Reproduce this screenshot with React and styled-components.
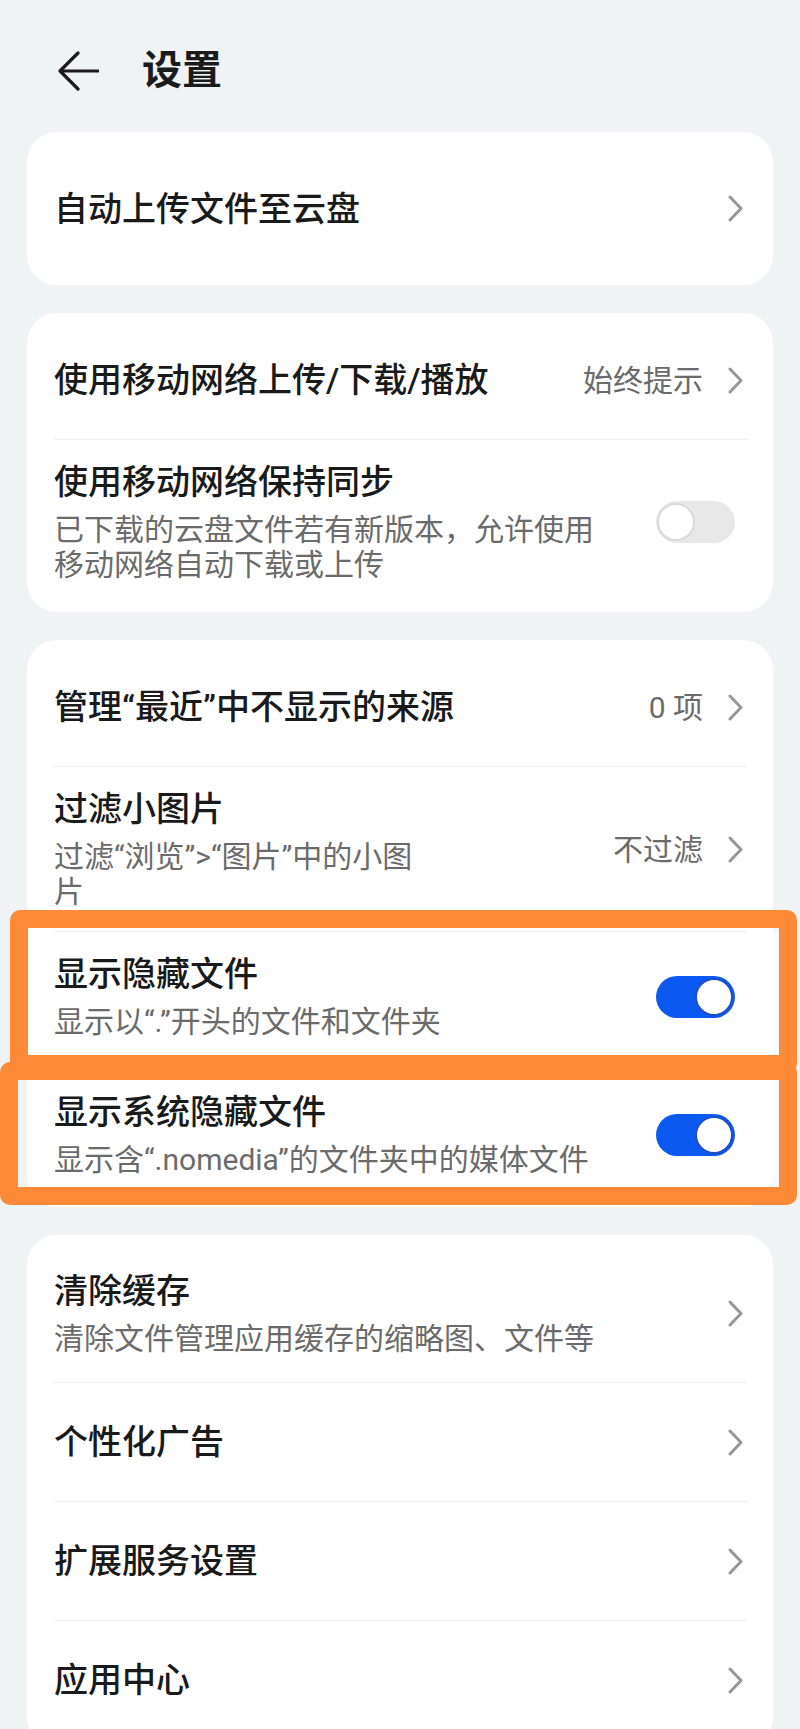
import React from "react";
import styled, { createGlobalStyle, css } from "styled-components";

const FONT = `Roboto, "Noto Sans CJK SC", "Noto Sans", sans-serif`;
const ORANGE = "#fd8a36";

const GlobalStyle = createGlobalStyle`
  html, body {
    margin: 0;
    padding: 0;
    background: #f0f3f3;
    font-family: ${FONT};
    -webkit-font-smoothing: antialiased;
  }
  * { box-sizing: border-box; }
`;

const groups = [
  {
    rows: [{ title: "自动上传文件至云盘", tall: true, chevron: true }]
  },
  {
    rows: [
      { title: "使用移动网络上传/下载/播放", value: "始终提示", chevron: true },
      {
        title: "使用移动网络保持同步",
        sub: "已下载的云盘文件若有新版本，允许使用移动网络自动下载或上传",
        wrap: 550,
        toggle: false
      }
    ]
  },
  {
    rows: [
      { title: "管理“最近”中不显示的来源", value: "0 项", chevron: true },
      {
        title: "过滤小图片",
        sub: "过滤“浏览”>“图片”中的小图片",
        wrap: 370,
        value: "不过滤",
        chevron: true
      },
      {
        title: "显示隐藏文件",
        sub: "显示以“.”开头的文件和文件夹",
        toggle: true,
        mark: "first"
      },
      {
        title: "显示系统隐藏文件",
        sub: "显示含“.nomedia”的文件夹中的媒体文件",
        toggle: true,
        mark: "second",
        pad: [30, 22]
      }
    ]
  },
  {
    rows: [
      {
        title: "清除缓存",
        sub: "清除文件管理应用缓存的缩略图、文件等",
        chevron: true,
        pad: [28, 26]
      },
      { title: "个性化广告", chevron: true },
      { title: "扩展服务设置", chevron: true },
      { title: "应用中心", chevron: true }
    ]
  }
];

function BackArrow() {
  return (
    <svg width="42" height="40" viewBox="0 0 42 40" fill="none">
      <path
        d="M41 20H3M21 2L3 20L21 38"
        stroke="#1b1b1b"
        strokeWidth="3.2"
        strokeLinecap="round"
        strokeLinejoin="round"
      />
    </svg>
  );
}

function Chevron() {
  return (
    <svg width="15" height="27" viewBox="0 0 15 27" fill="none">
      <path
        d="M2 2L13 13.5L2 25"
        stroke="#979797"
        strokeWidth="3"
        strokeLinecap="round"
        strokeLinejoin="round"
      />
    </svg>
  );
}

function SettingRow({ row }) {
  const [padTop, padBottom] = row.pad || [22, 22];
  return (
    <Row $tall={row.tall} $mark={row.mark} $padTop={padTop} $padBottom={padBottom}>
      <TextCol $wrap={row.wrap}>
        <Title>{row.title}</Title>
        {row.sub && <Sub>{row.sub}</Sub>}
      </TextCol>
      <Trail>
        {row.value && <Value>{row.value}</Value>}
        {row.chevron && <Chevron />}
        {row.toggle !== undefined && (
          <Switch $on={row.toggle}>
            <Knob $on={row.toggle} />
          </Switch>
        )}
      </Trail>
    </Row>
  );
}

export default function App() {
  return (
    <Page>
      <GlobalStyle />
      <Header>
        <BackArrow />
        <PageTitle>设置</PageTitle>
      </Header>
      <List>
        {groups.map((group, gi) => (
          <Card key={gi}>
            {group.rows.map((row, ri) => (
              <React.Fragment key={ri}>
                {ri > 0 && <Divider />}
                <SettingRow row={row} />
              </React.Fragment>
            ))}
          </Card>
        ))}
      </List>
    </Page>
  );
}

const Page = styled.div`
  width: 800px;
  min-height: 1729px;
  background: #f0f3f3;
  font-family: ${FONT};
`;

const Header = styled.header`
  display: flex;
  align-items: center;
  gap: 43px;
  padding: 51px 0 41px 57px;
  height: 132px;
`;

const PageTitle = styled.h1`
  margin: 0;
  font-size: 40px;
  line-height: 40px;
  font-weight: 700;
  color: #1b1b1b;
`;

const List = styled.div`
  display: flex;
  flex-direction: column;
  gap: 28px;
  padding: 0 27px 8px;
`;

const Card = styled.section`
  background: #ffffff;
  border-radius: 30px;
  padding: 8px 0;
`;

const Divider = styled.div`
  height: 1px;
  margin: 0 26px 0 27px;
  background: #eeeeee;
`;

const markBox = {
  first: css`
    top: -22px;
    left: -17px;
    right: -24px;
    bottom: -12px;
  `,
  second: css`
    top: 0;
    left: -27px;
    right: -24px;
    bottom: -6px;
  `
};

const Row = styled.div`
  position: relative;
  display: flex;
  align-items: center;
  justify-content: space-between;
  gap: 20px;
  min-height: ${({ $tall }) => ($tall ? "137px" : "118px")};
  padding: ${({ $padTop, $padBottom }) => `${$padTop}px 30px ${$padBottom}px 27px`};

  ${({ $mark }) =>
    $mark &&
    css`
      box-shadow: 9px 0 0 #fbfbfb;

      &::after {
        content: "";
        position: absolute;
        ${markBox[$mark]};
        border: 18px solid ${ORANGE};
        border-radius: 10px;
        pointer-events: none;
        z-index: 2;
      }
    `};
`;

const TextCol = styled.div`
  display: flex;
  flex-direction: column;
  gap: 10px;
  min-width: 0;
  max-width: ${({ $wrap }) => ($wrap ? `${$wrap}px` : "none")};
`;

const Title = styled.div`
  font-size: 34px;
  line-height: 40px;
  font-weight: 500;
  color: #1a1a1a;
`;

const Sub = styled.div`
  font-size: 30px;
  line-height: 35px;
  color: #6b6b6b;
`;

const Trail = styled.div`
  display: flex;
  align-items: center;
  gap: 25px;
  flex-shrink: 0;
`;

const Value = styled.span`
  font-size: 30px;
  line-height: 35px;
  color: #6b6b6b;
`;

const Switch = styled.div`
  position: relative;
  width: 79px;
  height: 42px;
  margin-right: 8px;
  border-radius: 21px;
  background: ${({ $on }) => ($on ? "#0b59f0" : "#e8e8e8")};
`;

const Knob = styled.div`
  position: absolute;
  top: 2px;
  left: ${({ $on }) => ($on ? "39px" : "1px")};
  width: 38px;
  height: 38px;
  border-radius: 50%;
  background: #ffffff;
  border: 2px solid ${({ $on }) => ($on ? "#1d4fc4" : "#dadada")};
`;
